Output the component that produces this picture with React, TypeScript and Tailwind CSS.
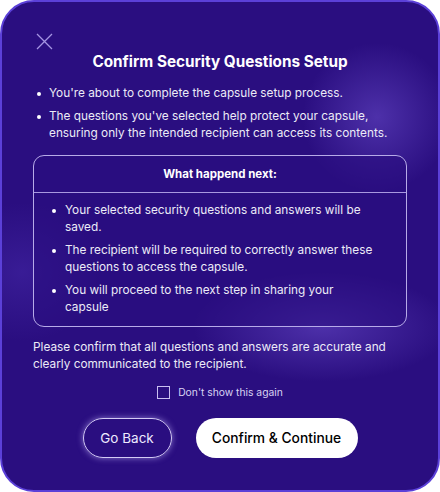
import React from 'react';

const App = () => {
  const intro = [
    "You're about to complete the capsule setup process.",
    "The questions you've selected help protect your capsule, ensuring only the intended recipient can access its contents.",
  ];
  const next = [
    'Your selected security questions and answers will be saved.',
    'The recipient will be required to correctly answer these questions to access the capsule.',
    'You will proceed to the next step in sharing your capsule',
  ];

  return (
    <div className="w-[440px] h-[492px] bg-white font-['Inter',sans-serif]">
      <div className="relative h-full overflow-hidden rounded-[34px] border-2 border-[#5b40d8] bg-[#2a0e80] text-white">
        {/* soft glows */}
        <div className="pointer-events-none absolute left-[300px] top-[40px] h-[150px] w-[150px] rounded-full bg-[radial-gradient(circle,rgba(120,90,220,0.45)_0%,rgba(120,90,220,0)_70%)]" />
        <div className="pointer-events-none absolute left-[190px] top-[270px] h-[110px] w-[260px] rounded-full bg-[radial-gradient(ellipse,rgba(120,90,220,0.45)_0%,rgba(120,90,220,0)_70%)]" />
        <div className="pointer-events-none absolute left-[-60px] top-[200px] h-[140px] w-[160px] rounded-full bg-[radial-gradient(ellipse,rgba(90,60,200,0.3)_0%,rgba(90,60,200,0)_70%)]" />

        <div className="relative flex flex-col px-[31px] pt-[30px]">
          <button className="ml-[2px] h-[18px] w-[18px] self-start text-[#a595e2]">
            <svg viewBox="0 0 18 18" className="h-[18px] w-[18px]" fill="none" stroke="currentColor" strokeWidth="1.3">
              <path d="M2 2 L17 17 M17 2 L2 17" />
            </svg>
          </button>

          <h2 className="mt-[2px] text-center text-[15.3px] font-bold leading-[20px]">Confirm Security Questions Setup</h2>

          <ul className="mt-[13px] flex flex-col gap-[6px] pl-[4px] pr-[4px] text-[11.8px] leading-[17px] text-[#ecebf7]">
            {intro.map((t) => (
              <li key={t} className="flex gap-[8px]">
                <span className="mt-[7px] h-[4px] w-[4px] shrink-0 rounded-full bg-white" />
                <span>{t}</span>
              </li>
            ))}
          </ul>

          <div className="mt-[13px] rounded-[11px] border border-[#b7abe8] bg-[#2a0e80]/60">
            <div className="border-b border-[#a898e0] py-[9px] text-center text-[11.5px] font-bold leading-[18px]">What happend next:</div>
            <ul className="flex flex-col gap-[6px] pl-[18px] pr-[28px] pb-[10px] pt-[9px] text-[11.8px] leading-[17px] text-[#ecebf7]">
              {next.map((t) => (
                <li key={t} className="flex gap-[9px]">
                  <span className="mt-[7px] h-[4px] w-[4px] shrink-0 rounded-full bg-white" />
                  <span>{t}</span>
                </li>
              ))}
            </ul>
          </div>

          <p className="mt-[12px] pr-[10px] text-[11.8px] leading-[17px] text-[#ecebf7]">
            Please confirm that all questions and answers are accurate and clearly communicated to the recipient.
          </p>

          <label className="mt-[12px] flex items-center justify-center gap-[8px] text-[10.3px] text-[#d9d3f3]">
            <span className="h-[13px] w-[13px] border border-[#c9bff0]" />
            Don't show this again
          </label>

          <div className="mt-[18px] flex justify-center gap-[24px]">
            <button className="h-[40px] w-[89px] rounded-full border-[1.5px] border-[#d4cbf5] text-[13.5px] text-[#eeeaff] shadow-[0_0_6px_rgba(200,185,255,0.6)]">
              Go Back
            </button>
            <button className="h-[40px] w-[162px] rounded-full bg-white text-[13.8px] font-medium text-black">
              Confirm &amp; Continue
            </button>
          </div>
        </div>
      </div>
    </div>
  );
};

export default App;
